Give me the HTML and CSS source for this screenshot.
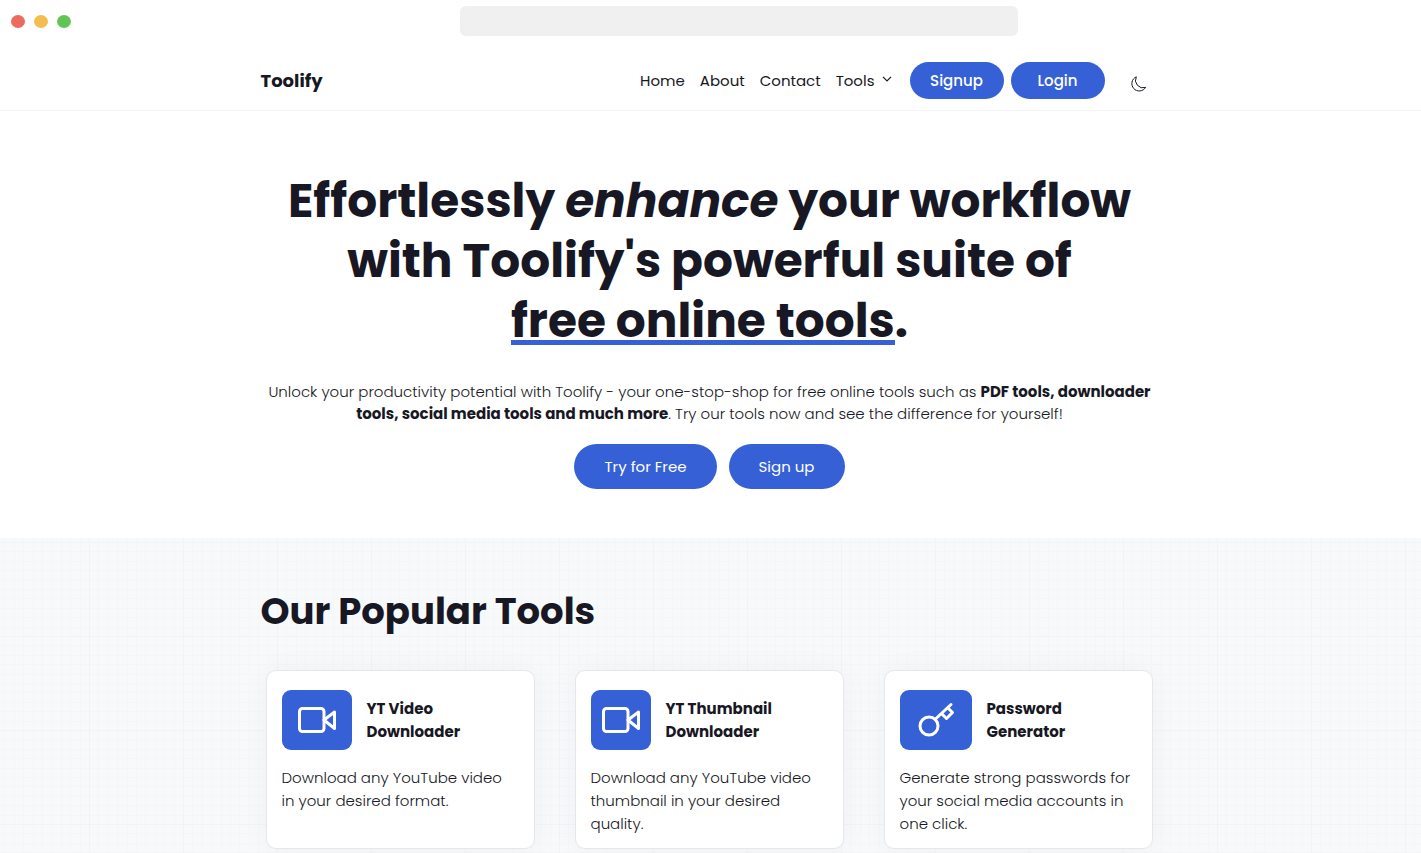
FILE: index.html
```html
<!DOCTYPE html>
<html lang="en">
<head>
  <meta charset="utf-8">
  <meta name="viewport" content="width=device-width, initial-scale=1">
  <title>Toolify</title>
  <link rel="stylesheet" href="styles.css">
</head>
<body>
  <div class="chrome">
    <div class="lights"><span class="light red"></span><span class="light amber"></span><span class="light green"></span></div>
    <div class="address"></div>
  </div>

  <header class="header">
    <div class="container nav">
      <a class="brand" href="#">Toolify</a>
      <nav class="links">
        <a href="#">Home</a>
        <a href="#">About</a>
        <a href="#">Contact</a>
        <a class="drop" href="#">Tools
          <svg width="10" height="6" viewBox="0 0 10 6" fill="none" stroke="currentColor" stroke-width="1.2" aria-hidden="true"><path d="M1 .8 5 4.8 9 .8"/></svg>
        </a>
      </nav>
      <div class="auth">
        <button class="pill small" type="button">Signup</button>
        <button class="pill small" type="button">Login</button>
      </div>
      <button class="theme" type="button" aria-label="Dark mode">
        <svg width="16" height="16" viewBox="0 0 16 16" fill="none" stroke="currentColor" stroke-linejoin="round" aria-hidden="true"><path d="M5.3.8A7.4 7.4 0 1 0 14.6 11.4 7.6 7.6 0 0 1 5.3.8Z"/></svg>
      </button>
    </div>
  </header>

  <main class="main">
    <section class="container hero">
      <h1>Effortlessly <em>enhance</em> your workflow<br>with Toolify's powerful suite of<br><span class="mark">free online tools</span>.</h1>
      <p>Unlock your productivity potential with Toolify - your one-stop-shop for free online tools such as <b>PDF tools, downloader<br>tools, social media tools and much more</b>. Try our tools now and see the difference for yourself!</p>
      <div class="actions">
        <button class="pill" type="button">Try for Free</button>
        <button class="pill" type="button">Sign up</button>
      </div>
    </section>

    <section class="popular">
      <div class="container">
        <h2>Our Popular Tools</h2>
        <div class="cards">
          <article class="card">
            <div class="card-head">
              <span class="icon wide"><svg width="40" height="40" viewBox="0 0 40 40" fill="none" stroke="currentColor" stroke-width="3" stroke-linejoin="round" aria-hidden="true"><rect x="2.5" y="8.5" width="24.5" height="23" rx="3"/><path d="M27 20 37.5 12v16.5Z"/></svg></span>
              <h3>YT Video<br>Downloader</h3>
            </div>
            <p>Download any YouTube video<br>in your desired format.</p>
          </article>
          <article class="card">
            <div class="card-head">
              <span class="icon"><svg width="40" height="40" viewBox="0 0 40 40" fill="none" stroke="currentColor" stroke-width="3" stroke-linejoin="round" aria-hidden="true"><rect x="2.5" y="8.5" width="24.5" height="23" rx="3"/><path d="M27 20 37.5 12v16.5Z"/></svg></span>
              <h3>YT Thumbnail<br>Downloader</h3>
            </div>
            <p>Download any YouTube video<br>thumbnail in your desired<br>quality.</p>
          </article>
          <article class="card">
            <div class="card-head">
              <span class="icon key"><svg width="40" height="40" viewBox="0 0 40 40" fill="none" stroke="currentColor" stroke-width="3" stroke-linecap="round" stroke-linejoin="round" aria-hidden="true"><circle cx="13" cy="26" r="9"/><path d="M19.5 19 35 4.5M32 8l4.5 4.5-6 6L26 14"/></svg></span>
              <h3>Password<br>Generator</h3>
            </div>
            <p>Generate strong passwords for<br>your social media accounts in<br>one click.</p>
          </article>
        </div>
      </div>
    </section>
  </main>
</body>
</html>
```
FILE: styles.css
```css
* { box-sizing: border-box; }

body {
  margin: 0;
  min-height: 100vh;
  display: flex;
  flex-direction: column;
  background: #fff;
  color: #181824;
  font-family: Poppins, Inter, sans-serif;
  font-size: 15px;
}

h1, h2, h3, p { margin: 0; }
a { color: inherit; text-decoration: none; }
button { font: inherit; border: 0; cursor: pointer; }

.container { width: 100%; max-width: 900px; margin: 0 auto; }

/* Window frame */
.chrome {
  display: grid;
  grid-template-columns: 460px minmax(0, 558px) 1fr;
  align-items: center;
  padding: 6px 0 14px;
}
.lights { display: flex; gap: 9px; padding-left: 11px; }
.light { width: 14px; height: 13px; border-radius: 50%; }
.red { background: #ed6a5e; }
.amber { background: #f4bd50; }
.green { background: #61c554; }
.address { height: 30px; border-radius: 6px; background: #f0f0f0; }

/* Navigation */
.header { border-bottom: 1px solid #f6f6f8; }
.nav { display: flex; align-items: center; padding: 12px 14px 11px 0; }
.brand { font-size: 18px; line-height: 28px; font-weight: 700; margin-right: auto; }
.links { display: flex; gap: 15px; margin-right: 18px; line-height: 24px; }
.drop { display: flex; gap: 7px; }
.drop svg { margin-top: 7px; }
.auth { display: flex; gap: 7px; }
.pill {
  padding: 0 30px;
  line-height: 45px;
  border-radius: 23px;
  background: #3660d5;
  color: #fff;
}
.pill.small {
  width: 94px;
  padding: 0;
  line-height: 37px;
  font-weight: 500;
}
.theme {
  display: flex;
  margin-left: 26px;
  padding: 6px 0 0;
  background: none;
  color: #181824;
}

/* Hero */
.main { flex: 1; display: flex; flex-direction: column; }
.hero { padding: 60px 2px 49px 0; text-align: center; }
.hero h1 { font-size: 47px; line-height: 60px; font-weight: 700; }
.mark {
  background: linear-gradient(#3660d5, #3660d5) 0 86% / 100% 5px no-repeat;
}
.hero p { margin: 30px 0 19px; line-height: 22px; font-weight: 300; }
.hero b { font-weight: 700; }
.actions { display: flex; justify-content: center; gap: 12px; }

/* Popular tools */
.popular {
  flex: 1;
  padding: 43px 0 4px;
  background-color: #f8f9fb;
  background-image:
    linear-gradient(90deg, #f2f3f5 1px, transparent 1px),
    linear-gradient(#f2f3f5 1px, transparent 1px),
    repeating-linear-gradient(90deg, #f5f6f8 0 1px, transparent 1px 10%),
    repeating-linear-gradient(#f5f6f8 0 1px, transparent 1px 10%);
  background-size: 94px 94px;
  background-position: 89px 4px;
}
.popular h2 { font-size: 37px; line-height: 60px; font-weight: 700; }
.cards {
  display: grid;
  grid-template-columns: repeat(3, 1fr);
  gap: 40px;
  padding: 29px 8px 0 5px;
}
.card {
  padding: 19px 15px 13px;
  border: 1px solid #e6e7ea;
  border-radius: 10px;
  background: #fff;
  box-shadow: 0 0 30px #0000000a;
}
.card-head { display: flex; align-items: center; gap: 15px; margin-bottom: 16px; }
.icon {
  display: grid;
  place-items: center;
  width: 60px;
  height: 60px;
  border-radius: 9px;
  background: #3660d5;
  color: #fff;
}
.icon.wide { width: 70px; }
.icon.key { width: 72px; }
.card h3 { font-size: 15px; line-height: 23px; font-weight: 700; }
.card p { line-height: 23px; font-weight: 300; white-space: nowrap; }
```
